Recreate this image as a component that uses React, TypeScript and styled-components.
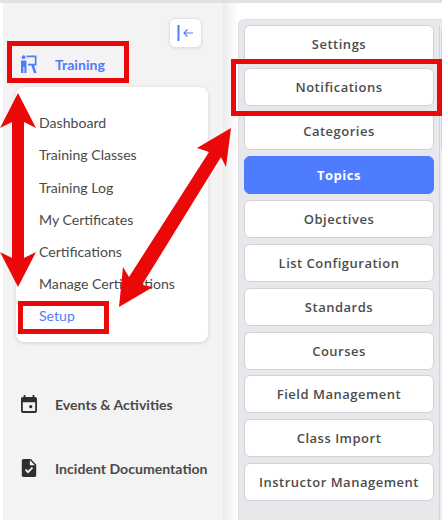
import React from 'react'
import styled, { createGlobalStyle } from 'styled-components'

const GlobalStyle = createGlobalStyle`
  html, body {
    margin: 0;
    padding: 0;
    background: #ffffff;
    overflow: hidden;
  }
  * {
    box-sizing: border-box;
  }
`

const Page = styled.div`
  position: relative;
  width: 442px;
  height: 520px;
  overflow: hidden;
  display: flex;
  padding-left: 3px;
  background: #ffffff;
  border-top: 3px solid #e2e2e2;
`

const Sidebar = styled.aside`
  width: 220px;
  flex-shrink: 0;
  background: #f3f3f3;
  display: flex;
  flex-direction: column;
  font-family: Lato, sans-serif;
`

const CollapseRow = styled.div`
  display: flex;
  justify-content: flex-end;
  padding: 15px 21px 0 0;
`

const CollapseButton = styled.button`
  width: 33px;
  height: 30px;
  padding: 0;
  display: flex;
  align-items: center;
  justify-content: center;
  background: #ffffff;
  border: 1px solid #e2e2e2;
  border-radius: 6px;
  box-shadow: 0 1px 3px rgba(0, 0, 0, 0.08);
`

const NavItem = styled.div<{ $active?: boolean; $top: number }>`
  display: flex;
  align-items: center;
  height: 24px;
  margin-top: ${props => props.$top}px;
  padding-left: 18px;
  gap: 18px;
  font-size: 14.1px;
  font-weight: 700;
  color: ${props => (props.$active ? '#4f7cff' : '#4a4a4a')};
  white-space: nowrap;
`

const NavIcon = styled.svg`
  width: 16px;
  height: 18px;
  flex-shrink: 0;
`

const SubMenu = styled.div`
  width: 192px;
  height: 255px;
  margin: 11px 0 0 13px;
  padding: 24.2px 0 0 23px;
  display: flex;
  flex-direction: column;
  gap: 8.2px;
  background: #ffffff;
  border-radius: 8px;
  box-shadow: 0 1px 4px rgba(0, 0, 0, 0.14);
`

const SubItem = styled.div<{ $active?: boolean }>`
  height: 24px;
  line-height: 24px;
  font-size: 14.1px;
  color: ${props => (props.$active ? '#4f7cff' : '#4a4a4a')};
  white-space: nowrap;
`

const Content = styled.main`
  flex: 1;
  min-width: 0;
  display: flex;
  padding: 16px 0 0 15px;
  background: linear-gradient(90deg, #ebebeb 0, #f8f8f8 9px, #ffffff 15px);
  background-size: 15px 100%;
  background-repeat: no-repeat;
`

const Panel = styled.div`
  flex: 1;
  display: flex;
  gap: 5px;
  padding: 4.6px 0 0 5px;
  overflow: hidden;
  background: #e6e8ec;
  border-radius: 6px 0 0 0;
  border: 1px solid #dcdee2;
  border-width: 1px 0 0 1px;
`

const Column = styled.div`
  width: 190px;
  flex-shrink: 0;
  display: flex;
  flex-direction: column;
  gap: 5.85px;
`

const SideColumn = styled.div`
  width: 20px;
  flex-shrink: 0;
  padding-left: 1px;
  border-left: 1px solid #d2d4d8;
  background: #ebedf0;
`

const SideCard = styled.div`
  height: 127px;
  background: #ffffff;
  border: 1px solid #d0d2d6;
  border-radius: 6px;
`

const TabButton = styled.div<{ $active?: boolean }>`
  height: 38px;
  flex-shrink: 0;
  display: flex;
  align-items: center;
  justify-content: center;
  border-radius: 6px;
  border: 1px solid ${props => (props.$active ? '#4f7cff' : '#d0d2d6')};
  background: ${props => (props.$active ? '#4f7cff' : '#ffffff')};
  color: ${props => (props.$active ? '#ffffff' : '#4c4c4c')};
  font-family: 'Open Sans', sans-serif;
  font-size: 13px;
  font-weight: ${props => (props.$active ? 700 : 600)};
  letter-spacing: 0.5px;
  white-space: nowrap;
`

const RedBox = styled.div<{ $left: number; $top: number; $width: number; $height: number }>`
  position: absolute;
  left: ${props => props.$left}px;
  top: ${props => props.$top - 3}px;
  width: ${props => props.$width}px;
  height: ${props => props.$height}px;
  border: 5px solid #ea0808;
`

const Arrows = styled.svg`
  position: absolute;
  left: 0;
  top: -3px;
  width: 442px;
  height: 520px;
  pointer-events: none;
`

const subItems = [
  'Dashboard',
  'Training Classes',
  'Training Log',
  'My Certificates',
  'Certifications',
  'Manage Certifications',
]

const tabs = [
  'Settings',
  'Notifications',
  'Categories',
  'Topics',
  'Objectives',
  'List Configuration',
  'Standards',
  'Courses',
  'Field Management',
  'Class Import',
  'Instructor Management',
]

function App() {
  return (
    <Page>
      <GlobalStyle />
      <Sidebar>
        <CollapseRow>
          <CollapseButton>
            <svg width="20" height="18" viewBox="0 0 20 18" fill="none">
              <path d="M2.5 1v16" stroke="#4f7cff" strokeWidth="2" />
              <path
                d="M17 9H8M11.5 5.5 8 9l3.5 3.5"
                stroke="#4f7cff"
                strokeWidth="1.2"
              />
            </svg>
          </CollapseButton>
        </CollapseRow>
        <NavItem $active $top={4}>
          <NavIcon viewBox="0 0 16 18" fill="#4f7cff">
            <circle cx="2.6" cy="2.2" r="1.9" />
            <path d="M0 5.5h5.5V18H3.4v-6H2.4v6H0z" />
            <path d="M5.5 0.5H15.5V10.5h-2.4L15.5 18h-2.6l-2.5-7.5H7V8.8h6.8V2.2H5.5z" />
          </NavIcon>
          Training
        </NavItem>
        <SubMenu>
          {subItems.map(item => (
            <SubItem key={item}>{item}</SubItem>
          ))}
          <SubItem $active>Setup</SubItem>
        </SubMenu>
        <NavItem $top={50}>
          <NavIcon viewBox="3 1 18 20" fill="#2f2f2f">
            <path d="M6 1h2v2h8V1h2v2h1c1.1 0 2 .9 2 2v14c0 1.1-.9 2-2 2H5c-1.1 0-2-.9-2-2V5c0-1.1.9-2 2-2h1zM5 9v10h14V9z" />
            <circle cx="14" cy="14" r="1.8" />
          </NavIcon>
          Events &amp; Activities
        </NavItem>
        <NavItem $top={40}>
          <NavIcon viewBox="4 2 16 20" fill="#2f2f2f">
            <path d="M14 2H6c-1.1 0-2 .9-2 2v16c0 1.1.9 2 2 2h12c1.1 0 2-.9 2-2V8l-6-6zm-3.06 16L7.4 14.46l1.41-1.41 2.12 2.12 4.24-4.24 1.41 1.41L10.94 18zM13 9V3.5L18.5 9H13z" />
          </NavIcon>
          Incident Documentation
        </NavItem>
      </Sidebar>
      <Content>
        <Panel>
          <Column>
            {tabs.map(tab => (
              <TabButton key={tab} $active={tab === 'Topics'}>
                {tab}
              </TabButton>
            ))}
          </Column>
          <SideColumn>
            <SideCard />
          </SideColumn>
        </Panel>
      </Content>
      <RedBox $left={7} $top={41} $width={122} $height={42} />
      <RedBox $left={18} $top={301} $width={91} $height={33} />
      <RedBox $left={231} $top={59} $width={211} $height={57} />
      <Arrows viewBox="0 0 442 520">
        <path
          fill="#ea0808"
          d="M18 93 36 128 24 122V258L36 252 18 287 0 252 12 258V122L0 128z"
        />
        <path
          fill="#ea0808"
          d="M231 128 197 148 209 152 129 277 123 267 119 307 153 287 142 285 221 157 226 167z"
        />
      </Arrows>
    </Page>
  )
}

export default App
